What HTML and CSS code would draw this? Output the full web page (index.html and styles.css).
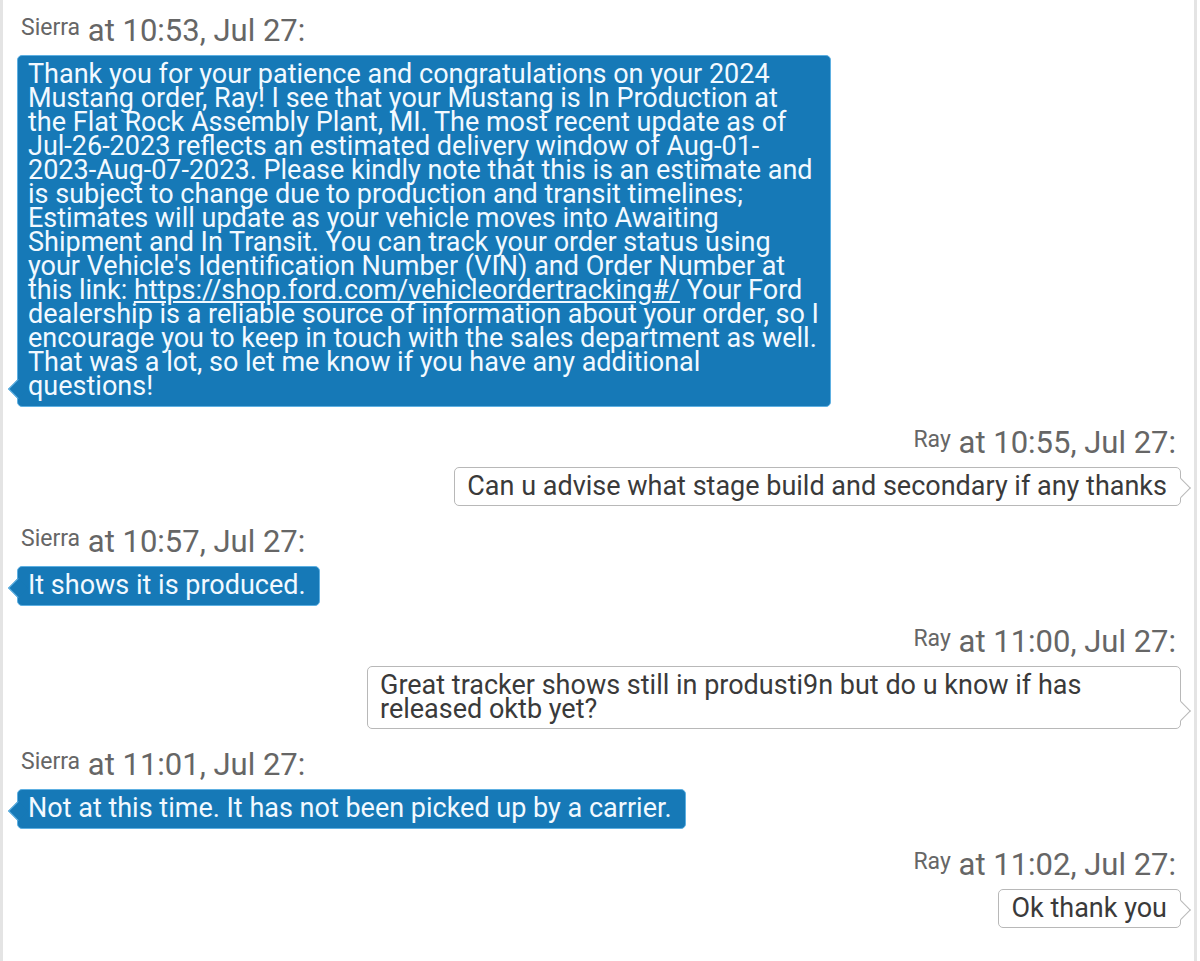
FILE: index.html
```html
<!DOCTYPE html>
<html>
<head>
<meta charset="utf-8">
<link rel="stylesheet" href="styles.css">
</head>
<body>
<div class="chat">
  <div class="msg in">
    <div class="meta"><span class="who">Sierra</span> <span class="when">at 10:53, Jul 27:</span></div>
    <div class="bubble wide">Thank you for your patience and congratulations on your 2024<br>Mustang order, Ray! I see that your Mustang is In Production at<br>the Flat Rock Assembly Plant, MI. The most recent update as of<br>Jul-26-2023 reflects an estimated delivery window of Aug-01-<br>2023-Aug-07-2023. Please kindly note that this is an estimate and<br>is subject to change due to production and transit timelines;<br>Estimates will update as your vehicle moves into Awaiting<br>Shipment and In Transit. You can track your order status using<br>your Vehicle's Identification Number (VIN) and Order Number at<br>this link: <a class="link" href="#">https://shop.ford.com/vehicleordertracking#/</a> Your Ford<br>dealership is a reliable source of information about your order, so I<br>encourage you to keep in touch with the sales department as well.<br>That was a lot, so let me know if you have any additional<br>questions!</div>
  </div>
  <div class="msg out">
    <div class="meta"><span class="who">Ray</span> <span class="when">at 10:55, Jul 27:</span></div>
    <div class="bubble">Can u advise what stage build and secondary if any thanks</div>
  </div>
  <div class="msg in">
    <div class="meta"><span class="who">Sierra</span> <span class="when">at 10:57, Jul 27:</span></div>
    <div class="bubble">It shows it is produced.</div>
  </div>
  <div class="msg out">
    <div class="meta"><span class="who">Ray</span> <span class="when">at 11:00, Jul 27:</span></div>
    <div class="bubble wide">Great tracker shows still in produsti9n but do u know if has<br>released oktb yet?</div>
  </div>
  <div class="msg in">
    <div class="meta"><span class="who">Sierra</span> <span class="when">at 11:01, Jul 27:</span></div>
    <div class="bubble">Not at this time. It has not been picked up by a carrier.</div>
  </div>
  <div class="msg out">
    <div class="meta"><span class="who">Ray</span> <span class="when">at 11:02, Jul 27:</span></div>
    <div class="bubble">Ok thank you</div>
  </div>
</div>
</body>
</html>
```
FILE: styles.css
```css
html, body {
  margin: 0;
  padding: 0;
  background: #ffffff;
}
.chat {
  width: 1197px;
  height: 961px;
  box-sizing: border-box;
  border-left: 3px solid #e4e4e4;
  border-right: 3px solid #e4e4e4;
  padding: 16px 13px 0 14px;
  font-family: Roboto, "Noto Sans", sans-serif;
  display: flex;
  flex-direction: column;
  gap: 21px;
  overflow: hidden;
}
.msg {
  display: flex;
  flex-direction: column;
}
.msg.in { align-items: flex-start; }
.msg.out { align-items: flex-end; }
.meta {
  color: #666666;
  font-size: 31px;
  line-height: 30px;
  margin-bottom: 9px;
  padding: 0 5px 0 4px;
  white-space: nowrap;
}
.who {
  font-size: 23px;
  line-height: 1;
  vertical-align: 6px;
}
.bubble {
  position: relative;
  max-width: 814px;
  box-sizing: border-box;
  font-size: 27px;
  line-height: 24px;
  border-radius: 5px;
  padding: 6px 13px 8px 10px;
  white-space: nowrap;
}
.bubble.wide { width: 814px; }
.msg.in .bubble {
  background: #1679b7;
  border: 1px solid #5eb0e2;
  color: #f2f9ff;
}
.msg.out .bubble {
  background: #ffffff;
  border: 1px solid #b8b8b8;
  color: #3a3a3a;
  padding: 6px 13px 7px 12px;
}
.bubble::after {
  content: "";
  position: absolute;
  bottom: 10px;
  width: 13px;
  height: 13px;
  transform: rotate(45deg);
}
.msg.in .bubble::after {
  left: -7px;
  background: #1679b7;
  border-left: 1px solid #5eb0e2;
  border-bottom: 1px solid #5eb0e2;
}
.msg.out .bubble::after {
  right: -8px;
  background: #ffffff;
  border-top: 1px solid #b8b8b8;
  border-right: 1px solid #b8b8b8;
}
.link {
  color: inherit;
  text-decoration: underline;
}
```
